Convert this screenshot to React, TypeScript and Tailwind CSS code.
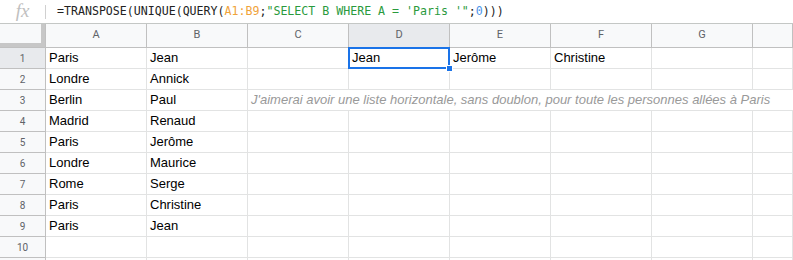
import React from "react";

const cols = ["A", "B", "C", "D", "E", "F", "G", ""];
const data: Record<number, string[]> = {
  1: ["Paris", "Jean", "", "Jean", "Jerôme", "Christine", "", ""],
  2: ["Londre", "Annick", "", "", "", "", "", ""],
  3: ["Berlin", "Paul", "", "", "", "", "", ""],
  4: ["Madrid", "Renaud", "", "", "", "", "", ""],
  5: ["Paris", "Jerôme", "", "", "", "", "", ""],
  6: ["Londre", "Maurice", "", "", "", "", "", ""],
  7: ["Rome", "Serge", "", "", "", "", "", ""],
  8: ["Paris", "Christine", "", "", "", "", "", ""],
  9: ["Paris", "Jean", "", "", "", "", "", ""],
  10: ["", "", "", "", "", "", "", ""],
  11: ["", "", "", "", "", "", "", ""],
};

export default function App() {
  const rows = [1, 2, 3, 4, 5, 6, 7, 8, 9, 10, 11];
  return (
    <div className="w-[793px] h-[260px] overflow-hidden bg-white" style={{ fontFamily: '"Liberation Sans", Arial, sans-serif' }}>
      {/* formula bar */}
      <div className="h-[24px] flex items-center border-b border-[#c4c7c5] bg-white">
        <div className="w-[45px] flex justify-center items-center h-full">
          <span className="italic text-[#c0c0c0] text-[19px] leading-none -mt-[2px]" style={{ fontFamily: '"Liberation Serif", "DejaVu Serif", serif' }}>fx</span>
        </div>
        <div className="w-px h-[14px] bg-[#d0d0d0]" />
        <div className="pl-[11px] text-[11.6px] text-[#222] whitespace-nowrap" style={{ fontFamily: '"DejaVu Sans Mono", "Liberation Mono", monospace' }}>
          =TRANSPOSE(UNIQUE(QUERY(<span className="text-[#f0a33a]">A1:B9</span>;<span className="text-[#2a9a3d]">"SELECT B WHERE A = 'Paris '"</span>;<span className="text-[#4d94e8]">0</span>)))
        </div>
      </div>
      {/* grid */}
      <div className="grid grid-cols-[46px_repeat(7,101px)_40px]">
        {/* header row */}
        <div className="h-[24px] bg-[#c7c7c7] border-r border-b border-[#c0c0c0] flex">
          <div className="w-[41px] h-[19px] bg-[#f8f9fa]" />
        </div>
        {cols.map((c, i) => (
          <div
            key={c + i}
            className={`h-[24px] border-r border-b border-[#c0c0c0] flex items-center justify-center text-[11px] text-[#5f6368] ${c === "D" ? "bg-[#e8eaed]" : "bg-[#f8f9fa]"}`}
            style={{ fontFamily: 'Roboto, "Liberation Sans", sans-serif' }}
          >
            {c}
          </div>
        ))}
        {rows.map((r) => (
          <React.Fragment key={r}>
            <div
              className={`h-[21px] border-r border-b border-[#c0c0c0] flex items-center justify-center text-[10px] text-[#5f6368] ${r === 1 ? "bg-[#e8eaed]" : "bg-[#f8f9fa]"}`}
              style={{ fontFamily: 'Roboto, "Liberation Sans", sans-serif' }}
            >
              {r <= 10 ? r : ""}
            </div>
            {data[r].map((v, ci) => {
              const isSel = r === 1 && ci === 3;
              const note = r === 3 && ci === 2;
              return (
                <div
                  key={ci}
                  className={`relative h-[21px] border-b border-[#e2e3e3] ${note ? "" : "border-r"} ${r === 3 && ci > 2 ? "border-r-0" : ""} text-[13px] leading-[20px] pl-[3px] whitespace-nowrap text-black`}
                >
                  {note ? (
                    <span className="absolute left-[3px] top-0 italic text-[#999] z-10">
                      J'aimerai avoir une liste horizontale, sans doublon, pour toute les personnes allées à Paris
                    </span>
                  ) : (
                    v
                  )}
                  {isSel && (
                    <>
                      <div className="absolute -left-px -top-px w-[102px] h-[22px] border-2 border-[#1a73e8] pointer-events-none" />
                      <div className="absolute right-[-4px] bottom-[-4px] w-[7px] h-[7px] bg-[#1a73e8] border border-white z-20" />
                    </>
                  )}
                </div>
              );
            })}
          </React.Fragment>
        ))}
      </div>
    </div>
  );
}
